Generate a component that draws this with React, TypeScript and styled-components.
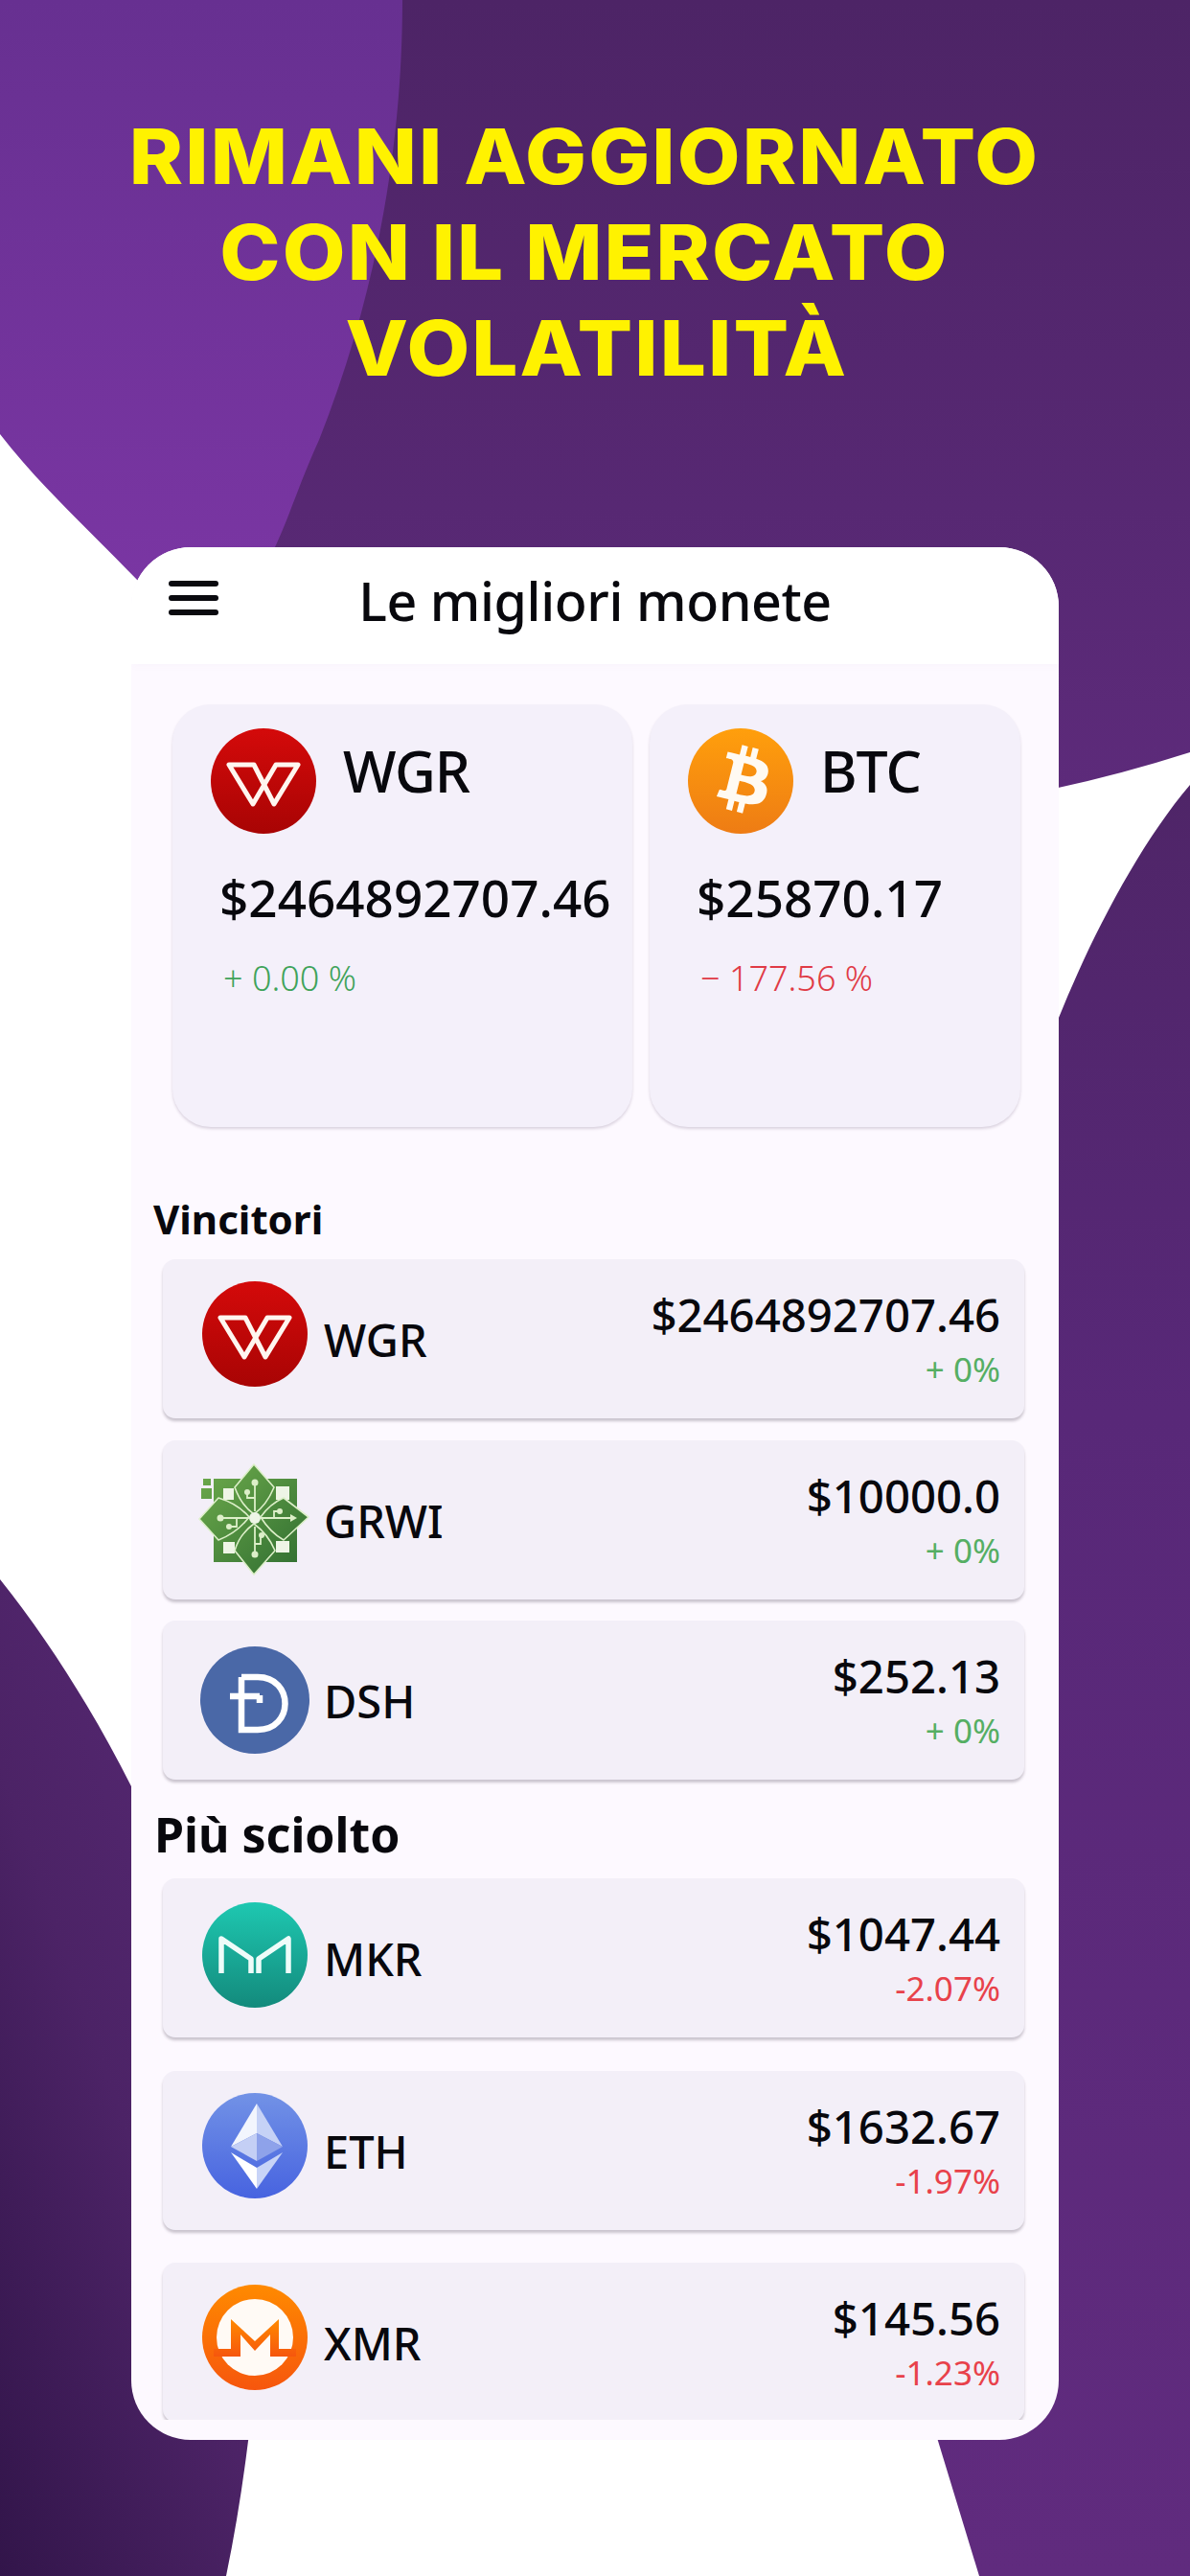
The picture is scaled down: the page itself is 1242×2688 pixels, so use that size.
import React from 'react';
import styled, { createGlobalStyle } from 'styled-components';

const Global = createGlobalStyle`
  html, body { margin: 0; padding: 0; background: #fff; }
  * { box-sizing: border-box; }
`;

const Page = styled.div`
  position: relative;
  width: 1242px;
  height: 2688px;
  overflow: hidden;
  background: #ffffff;
  font-family: "Noto Sans", "Open Sans", sans-serif;
  color: #08080d;
`;
const Backdrop = styled.svg`
  position: absolute;
  inset: 0;
  width: 1242px;
  height: 2688px;
`;
const Content = styled.div`
  position: relative;
  display: flex;
  flex-direction: column;
  align-items: flex-start;
  height: 100%;
  padding: 113px 0 0 137px;
`;
const Headline = styled.h1`
  margin: 0 0 0 -137px;
  width: 1220px;
  font-family: Inter, "Liberation Sans", sans-serif;
  font-weight: 800;
  font-size: 80px;
  line-height: 100px;
  letter-spacing: 2px;
  text-align: center;
  color: #fff200;
  transform: scaleX(1.064);
`;
const HeadLine = styled.span<{ $shift?: number }>`
  display: block;
  padding-left: ${(p) => p.$shift ?? 0}px;
`;
const Panel = styled.section`
  display: flex;
  flex-direction: column;
  margin-top: 158px;
  width: 968px;
  height: 1975px;
  padding-bottom: 21px;
  border-radius: 62px;
  overflow: hidden;
  background: #fdf9ff;
`;
const Header = styled.header`
  flex: none;
  display: grid;
  grid-template-columns: 1fr auto 1fr;
  align-items: center;
  height: 122px;
  padding: 0 39px 4px;
  background: #ffffff;
  box-shadow: 0 2px 8px rgba(120, 90, 150, 0.03);
`;
const Burger = styled.div`
  display: flex;
  flex-direction: column;
  gap: 9px;
  width: 52px;
  margin-bottom: 12px;
`;
const BurgerBar = styled.span`
  height: 6px;
  border-radius: 3px;
  background: #0a0a0f;
`;
const Title = styled.h2`
  margin: 0 0 6px;
  font-size: 55.5px;
  font-weight: 500;
  line-height: 70px;
  letter-spacing: -0.4px;
`;
const Scroll = styled.div`
  flex: 1;
  min-height: 0;
  overflow: hidden;
`;
const TopCards = styled.div`
  display: flex;
  gap: 18px;
  padding: 42px 0 0 43px;
`;
const TopCard = styled.article<{ $w: number }>`
  width: ${(p) => p.$w}px;
  height: 441px;
  padding: 25px 0 0 40px;
  border-radius: 40px;
  background: #f4f0fa;
  box-shadow: 0 2px 3px rgba(60, 40, 80, 0.18);
`;
const CardHead = styled.div<{ $gap: number }>`
  display: flex;
  align-items: flex-start;
  gap: ${(p) => p.$gap}px;
`;
const CardSymbol = styled.div`
  margin-top: 9px;
  font-size: 59px;
  font-weight: 500;
  line-height: 70px;
  letter-spacing: -1px;
`;
const CardPrice = styled.div`
  margin: 32px 0 0 9px;
  font-size: 53px;
  font-weight: 500;
  line-height: 70px;
  white-space: nowrap;
`;
const CardChange = styled.div<{ $up: boolean }>`
  margin: 29px 0 0 13px;
  font-size: 36px;
  font-weight: 300;
  line-height: 40px;
  color: ${(p) => (p.$up ? '#3fa35a' : '#e03a45')};
`;
const SectionTitle = styled.h3<{ $size: number; $top: number; $left: number; $h: number }>`
  margin: ${(p) => p.$top}px 0 0 ${(p) => p.$left}px;
  font-size: ${(p) => p.$size}px;
  font-weight: 700;
  line-height: ${(p) => p.$h}px;
`;
const Rows = styled.div<{ $gap: number; $top: number }>`
  display: flex;
  flex-direction: column;
  gap: ${(p) => p.$gap}px;
  margin: ${(p) => p.$top}px 36px 0 33px;
`;
const Row = styled.article`
  flex: none;
  display: flex;
  align-items: flex-start;
  height: 166px;
  padding: 0 25px 0 41px;
  border-radius: 13px;
  background: #f3eff8;
  box-shadow: 0 3px 3px rgba(40, 30, 50, 0.24);
`;
const LogoBox = styled.div<{ $drop: number }>`
  flex: none;
  width: 110px;
  height: 110px;
  margin-top: ${(p) => 23 + p.$drop}px;
`;
const LogoSvg = styled.svg`
  display: block;
  width: 110px;
  height: 110px;
  overflow: visible;
`;
const RowName = styled.div`
  margin: 54px 0 0 17px;
  font-size: 47px;
  font-weight: 500;
  line-height: 60px;
`;
const RowValues = styled.div`
  margin-left: auto;
  display: flex;
  flex-direction: column;
  align-items: flex-end;
  padding-top: 33px;
`;
const RowPrice = styled.div`
  font-size: 47.3px;
  font-weight: 500;
  line-height: 50px;
  white-space: nowrap;
`;
const RowChange = styled.div<{ $up: boolean }>`
  margin-top: 12px;
  font-size: 35px;
  line-height: 40px;
  color: ${(p) => (p.$up ? '#55ae63' : '#e8414a')};
`;

const Wgr = () => (
  <LogoSvg viewBox="0 0 110 110">
    <defs>
      <linearGradient id="wgr" x1="0" y1="0" x2="0" y2="1">
        <stop offset="0" stopColor="#d40a0a" />
        <stop offset="1" stopColor="#a80404" />
      </linearGradient>
    </defs>
    <circle cx="55" cy="55" r="55" fill="url(#wgr)" />
    <path d="M19 38H45L66 79L91 38H68L44 79Z" fill="none" stroke="#fff6f0" strokeWidth="5" strokeLinejoin="round" />
  </LogoSvg>
);
const Btc = () => (
  <LogoSvg viewBox="0 0 110 110">
    <defs>
      <linearGradient id="btc" x1="0" y1="0" x2="0" y2="1">
        <stop offset="0" stopColor="#ff9f0c" />
        <stop offset="1" stopColor="#ee7c14" />
      </linearGradient>
    </defs>
    <circle cx="55" cy="55" r="55" fill="url(#btc)" />
    <path
      transform="translate(3 -2) scale(1.75)"
      fill="#fffaf2"
      d="M46.1 27.44c.64-4.28-2.62-6.58-7.08-8.12l1.45-5.8-3.53-.88-1.41 5.65c-.93-.23-1.88-.45-2.83-.67l1.42-5.68-3.53-.88-1.45 5.8c-.77-.17-1.52-.35-2.26-.53v-.02l-4.87-1.22-.94 3.77s2.62.6 2.57.64c1.43.36 1.69 1.3 1.65 2.05l-1.65 6.6c.1.03.23.06.37.12l-.38-.09-2.31 9.25c-.18.44-.62 1.1-1.63.85.04.05-2.57-.64-2.57-.64l-1.75 4.04 4.6 1.14c.85.22 1.69.44 2.52.65l-1.46 5.87 3.53.88 1.45-5.81c.96.26 1.9.5 2.81.73l-1.44 5.78 3.53.88 1.47-5.86c6.03 1.14 10.56.68 12.47-4.77 1.54-4.39-.08-6.92-3.25-8.57 2.31-.53 4.05-2.05 4.52-5.18zm-8.08 11.33c-1.09 4.39-8.48 2.02-10.88 1.42l1.94-7.78c2.4.6 10.08 1.78 8.94 6.36zm1.09-11.39c-1 3.99-7.15 1.96-9.14 1.46l1.76-7.05c2 .5 8.42 1.43 7.38 5.59z"
    />
  </LogoSvg>
);
const Grwi = () => (
  <LogoSvg viewBox="11 11 110 110">
    <defs>
      <linearGradient id="grwi" gradientUnits="userSpaceOnUse" x1="10" y1="13" x2="120" y2="128">
        <stop offset="0" stopColor="#6eab4c" />
        <stop offset="1" stopColor="#2e6c30" />
      </linearGradient>
    </defs>
    <rect x="23" y="28" width="87" height="87" fill="url(#grwi)" />
    <rect x="12" y="28" width="8" height="7" fill="url(#grwi)" />
    <rect x="10" y="38" width="11" height="11" fill="url(#grwi)" />
    <g fill="#eef5e6">
      <rect x="88" y="36" width="14" height="14" />
      <rect x="33" y="94" width="12" height="12" />
      <rect x="88" y="93" width="14" height="12" />
      <rect x="33" y="38" width="11" height="12" />
    </g>
    <g fill="url(#grwi)" stroke="#dcefc8" strokeWidth="1.6" strokeLinejoin="round">
      <path d="M65 13L86 37Q78 56 65 65Q52 56 45 37Z" />
      <path d="M8 70L28 48Q48 54 60 68Q48 84 28 92Z" />
      <path d="M122 68L96 48Q82 54 72 68Q82 84 96 92Z" />
      <path d="M65 128L45 103Q50 86 65 75Q80 86 87 103Z" />
    </g>
    <circle cx="66" cy="69" r="6" fill="#eef5e6" />
    <g fill="none" stroke="#dcefc8" strokeWidth="1.8">
      <path d="M30 69H60M47 69V78H39M66 32V62M66 48H58V41M72 69H104M86 69V62H92M66 78V106M66 96H72V88" />
    </g>
    <g fill="#dcefc8">
      <circle cx="30" cy="69" r="3.5" />
      <circle cx="39" cy="78" r="3" />
      <circle cx="66" cy="32" r="3.5" />
      <circle cx="58" cy="42" r="3" />
      <path d="M103 65L110 69L103 73Z" />
      <circle cx="92" cy="62" r="3" />
      <circle cx="66" cy="107" r="3.5" />
      <circle cx="73" cy="87" r="3" />
    </g>
  </LogoSvg>
);
const Dsh = () => (
  <LogoSvg viewBox="0 0 110 110">
    <ellipse cx="55" cy="55" rx="57" ry="56" fill="#4a68a7" />
    <path d="M29 51H60M60 50V58M41 31V86H58C96 86 96 31 58 31H41" fill="none" stroke="#ffffff" strokeWidth="6.5" />
  </LogoSvg>
);
const Mkr = () => (
  <LogoSvg viewBox="0 0 110 110">
    <defs>
      <linearGradient id="mkr" x1="0" y1="0" x2="0" y2="1">
        <stop offset="0" stopColor="#1ec8b1" />
        <stop offset="1" stopColor="#138a7c" />
      </linearGradient>
    </defs>
    <circle cx="55" cy="55" r="55" fill="url(#mkr)" />
    <path d="M20 74V38L51 59V74M59 74V59L90 38V74" fill="none" stroke="#eefcf9" strokeWidth="5.5" strokeLinejoin="round" />
  </LogoSvg>
);
const Eth = () => (
  <LogoSvg viewBox="0 0 110 110">
    <defs>
      <linearGradient id="eth" x1="0" y1="0" x2="0" y2="1">
        <stop offset="0" stopColor="#7292e6" />
        <stop offset="1" stopColor="#4763e0" />
      </linearGradient>
    </defs>
    <circle cx="55" cy="55" r="55" fill="url(#eth)" />
    <path d="M57 11L30 56L57 42Z" fill="#f2f5fd" />
    <path d="M57 11L84 56L57 42Z" fill="#c6d2f6" />
    <path d="M57 42L30 56L57 71Z" fill="#c4cff5" />
    <path d="M57 42L84 56L57 71Z" fill="#8ea2ea" />
    <path d="M30 62L57 100V78Z" fill="#ffffff" />
    <path d="M84 62L57 100V78Z" fill="#c8d4f7" />
  </LogoSvg>
);
const Xmr = () => (
  <LogoSvg viewBox="0 0 110 110">
    <defs>
      <linearGradient id="xmr" x1="0" y1="0" x2="0" y2="1">
        <stop offset="0" stopColor="#ff8a00" />
        <stop offset="1" stopColor="#f6560d" />
      </linearGradient>
    </defs>
    <circle cx="55" cy="55" r="55" fill="url(#xmr)" />
    <circle cx="55" cy="55" r="40" fill="#fffaf5" />
    <path d="M30 36L55 59L80 36V67H98V75H71V52L55 69L40 52V75H12V67H30Z" fill="url(#xmr)" />
  </LogoSvg>
);

const winners = [
  { sym: 'WGR', Logo: Wgr, price: '$2464892707.46', change: '+ 0%', up: true, drop: 0 },
  { sym: 'GRWI', Logo: Grwi, price: '$10000.0', change: '+ 0%', up: true, drop: 0 },
  { sym: 'DSH', Logo: Dsh, price: '$252.13', change: '+ 0%', up: true, drop: 5 },
];
const losers = [
  { sym: 'MKR', Logo: Mkr, price: '$1047.44', change: '-2.07%', up: false, drop: 2 },
  { sym: 'ETH', Logo: Eth, price: '$1632.67', change: '-1.97%', up: false, drop: 0 },
  { sym: 'XMR', Logo: Xmr, price: '$145.56', change: '-1.23%', up: false, drop: 0 },
];

const CoinRow = ({ sym, Logo, price, change, up, drop }: (typeof winners)[number]) => (
  <Row>
    <LogoBox $drop={drop}>
      <Logo />
    </LogoBox>
    <RowName>{sym}</RowName>
    <RowValues>
      <RowPrice>{price}</RowPrice>
      <RowChange $up={up}>{change}</RowChange>
    </RowValues>
  </Row>
);

export default function App() {
  return (
    <Page>
      <Global />
      <Backdrop viewBox="0 0 1242 2688">
        <defs>
          <linearGradient id="darkTop" x1="0" y1="0" x2="0" y2="1">
            <stop offset="0" stopColor="#4d2466" />
            <stop offset="1" stopColor="#5e2b7c" />
          </linearGradient>
          <linearGradient id="lightTop" x1="0" y1="0" x2="0" y2="1">
            <stop offset="0" stopColor="#673091" />
            <stop offset="1" stopColor="#7b36a4" />
          </linearGradient>
          <linearGradient id="leftLow" x1="0.9" y1="0" x2="0" y2="1">
            <stop offset="0" stopColor="#5a2a78" />
            <stop offset="0.55" stopColor="#4c2366" />
            <stop offset="1" stopColor="#32154a" />
          </linearGradient>
          <linearGradient id="rightLow" x1="0" y1="0" x2="0" y2="1">
            <stop offset="0" stopColor="#4f2568" />
            <stop offset="0.35" stopColor="#582878" />
            <stop offset="1" stopColor="#602b7e" />
          </linearGradient>
        </defs>
        <path d="M200 0H1242V785Q1170 808 1100 823L200 900Z" fill="url(#darkTop)" />
        <path d="M0 0H420C420 130 400 290 333 459C310 510 300 545 285 575L240 650L146 608C90 550 40 505 0 453Z" fill="url(#lightTop)" />
        <path d="M1242 819C1190 880 1140 975 1105 1062L900 2300L979 2547L1022 2688H1242Z" fill="url(#rightLow)" />
        <path d="M0 1648C50 1710 100 1790 137 1864L320 2300L259 2547Q250 2620 236 2688H0Z" fill="url(#leftLow)" />
      </Backdrop>
      <Content>
        <Headline>
          <HeadLine>RIMANI AGGIORNATO</HeadLine>
          <HeadLine>CON IL MERCATO</HeadLine>
          <HeadLine $shift={24}>VOLATILITÀ</HeadLine>
        </Headline>
        <Panel>
          <Header>
            <Burger>
              <BurgerBar />
              <BurgerBar />
              <BurgerBar />
            </Burger>
            <Title>Le migliori monete</Title>
          </Header>
          <Scroll>
            <TopCards>
              <TopCard $w={480}>
                <CardHead $gap={28}>
                  <LogoBox $drop={-23}>
                    <Wgr />
                  </LogoBox>
                  <CardSymbol>WGR</CardSymbol>
                </CardHead>
                <CardPrice>$2464892707.46</CardPrice>
                <CardChange $up>+ 0.00 %</CardChange>
              </TopCard>
              <TopCard $w={387}>
                <CardHead $gap={28}>
                  <LogoBox $drop={-23}>
                    <Btc />
                  </LogoBox>
                  <CardSymbol>BTC</CardSymbol>
                </CardHead>
                <CardPrice>$25870.17</CardPrice>
                <CardChange $up={false}>− 177.56 %</CardChange>
              </TopCard>
            </TopCards>
            <SectionTitle $size={42} $top={71} $left={23} $h={50}>
              Vincitori
            </SectionTitle>
            <Rows $gap={22.5} $top={17}>
              {winners.map((c) => (
                <CoinRow key={c.sym} {...c} />
              ))}
            </Rows>
            <SectionTitle $size={50} $top={27} $left={24} $h={60}>
              Più sciolto
            </SectionTitle>
            <Rows $gap={34.5} $top={16}>
              {losers.map((c) => (
                <CoinRow key={c.sym} {...c} />
              ))}
            </Rows>
          </Scroll>
        </Panel>
      </Content>
    </Page>
  );
}
